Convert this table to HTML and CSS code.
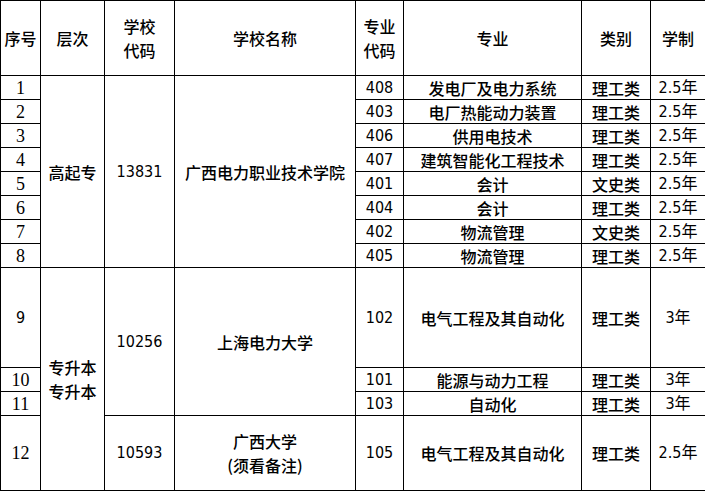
FILE: index.html
```html
<!DOCTYPE html>
<html lang="zh">
<head>
<meta charset="utf-8">
<title>招生专业表</title>
<link rel="stylesheet" href="styles.css">
</head>
<body>
<table class="plan">
  <colgroup>
    <col class="c-no"><col class="c-level"><col class="c-scode"><col class="c-sname">
    <col class="c-mcode"><col class="c-major"><col class="c-type"><col class="c-years">
  </colgroup>
  <thead>
    <tr class="r-head">
      <th>序号</th>
      <th>层次</th>
      <th class="two">学校<br>代码</th>
      <th>学校名称</th>
      <th class="two">专业<br>代码</th>
      <th>专业</th>
      <th>类别</th>
      <th>学制</th>
    </tr>
  </thead>
  <tbody>
    <tr>
      <td class="no">1</td>
      <td rowspan="8">高起专</td>
      <td rowspan="8" class="num">13831</td>
      <td rowspan="8">广西电力职业技术学院</td>
      <td class="num">408</td><td>发电厂及电力系统</td><td>理工类</td><td class="num">2.5年</td>
    </tr>
    <tr><td class="no">2</td><td class="num">403</td><td>电厂热能动力装置</td><td>理工类</td><td class="num">2.5年</td></tr>
    <tr><td class="no">3</td><td class="num">406</td><td>供用电技术</td><td>理工类</td><td class="num">2.5年</td></tr>
    <tr><td class="no">4</td><td class="num">407</td><td>建筑智能化工程技术</td><td>理工类</td><td class="num">2.5年</td></tr>
    <tr><td class="no">5</td><td class="num">401</td><td>会计</td><td>文史类</td><td class="num">2.5年</td></tr>
    <tr><td class="no">6</td><td class="num">404</td><td>会计</td><td>理工类</td><td class="num">2.5年</td></tr>
    <tr><td class="no">7</td><td class="num">402</td><td>物流管理</td><td>文史类</td><td class="num">2.5年</td></tr>
    <tr><td class="no">8</td><td class="num">405</td><td>物流管理</td><td>理工类</td><td class="num">2.5年</td></tr>
    <tr class="r-tall">
      <td class="no sans">9</td>
      <td rowspan="4" class="two">专升本<br>专升本</td>
      <td rowspan="3" class="num">10256</td>
      <td rowspan="3">上海电力大学</td>
      <td class="num">102</td><td>电气工程及其自动化</td><td>理工类</td><td class="num">3年</td>
    </tr>
    <tr><td class="no">10</td><td class="num">101</td><td>能源与动力工程</td><td>理工类</td><td class="num">3年</td></tr>
    <tr><td class="no">11</td><td class="num">103</td><td>自动化</td><td>理工类</td><td class="num">3年</td></tr>
    <tr class="r-last">
      <td class="no">12</td>
      <td class="num">10593</td>
      <td class="two">广西大学<br>(须看备注)</td>
      <td class="num">105</td><td>电气工程及其自动化</td><td>理工类</td><td class="num">2.5年</td>
    </tr>
  </tbody>
</table>
</body>
</html>
```

FILE: styles.css
```css
html, body {
  margin: 0;
  padding: 0;
  background: #ffffff;
}

.plan {
  border-collapse: collapse;
  table-layout: fixed;
  width: 705px;
  font-family: "Noto Sans CJK SC", "Noto Sans", sans-serif;
  font-size: 16px;
  color: #000;
}

.c-no { width: 40px; }
.c-level { width: 64px; }
.c-scode { width: 70px; }
.c-sname { width: 181px; }
.c-mcode { width: 48px; }
.c-major { width: 178px; }
.c-type { width: 69px; }
.c-years { width: 55px; }

.plan th,
.plan td {
  border: 1px solid #000;
  padding: 0;
  height: 23px;
  line-height: 16px;
  text-align: center;
  vertical-align: middle;
  font-weight: 500;
  white-space: nowrap;
}

.plan .two { line-height: 24px; }

.plan .r-head th { height: 74px; }
.plan .r-tall td.no { height: 99px; }
.plan .r-last td { height: 74px; }

.plan .num {
  font-family: "DejaVu Sans Condensed", "DejaVu Sans", "Noto Sans CJK SC", sans-serif;
  font-weight: normal;
}

.plan .no {
  font-family: "Liberation Serif", "Noto Sans CJK SC", serif;
  font-size: 18px;
  font-weight: normal;
}

.plan .no.sans {
  font-family: "DejaVu Sans Condensed", "DejaVu Sans", sans-serif;
  font-size: 16px;
}
```
